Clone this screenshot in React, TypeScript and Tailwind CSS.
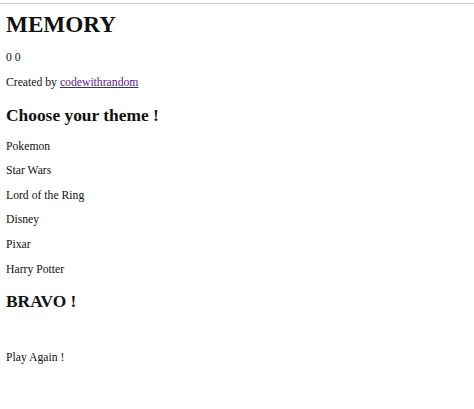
import React from "react";

export default function App() {
  const themes = ["Pokemon", "Star Wars", "Lord of the Ring", "Disney", "Pixar", "Harry Potter"];
  return (
    <div className="min-h-[409px] bg-white text-[#111]" style={{ fontFamily: '"Liberation Serif", "Times New Roman", serif' }}>
      <div className="pt-[3px]">
        <div className="h-px bg-[#d0d0d0]" />
      </div>
      <div className="flex flex-col px-[6px]">
        <h1 className="mt-[7.2px] text-[23.2px] leading-[26px] font-bold">MEMORY</h1>
        <p className="mt-[13.4px] text-[11.7px] leading-[13px]">0 0</p>
        <p className="mt-[12px] text-[11.7px] leading-[13px]">
          Created by <a href="#" className="text-[#551a8b] underline">codewithrandom</a>
        </p>
        <h2 className="mt-[16.6px] text-[17.4px] leading-[20px] font-bold">Choose your theme !</h2>
        <div className="mt-[14.4px] flex flex-col gap-[11.6px]">
          {themes.map((t) => (
            <p key={t} className="text-[11.7px] leading-[13px]">{t}</p>
          ))}
        </div>
        <h2 className="mt-[15.6px] text-[17.4px] leading-[20px] font-bold">BRAVO !</h2>
        <p className="mt-[39.4px] text-[11.7px] leading-[13px]">Play Again !</p>
      </div>
    </div>
  );
}
